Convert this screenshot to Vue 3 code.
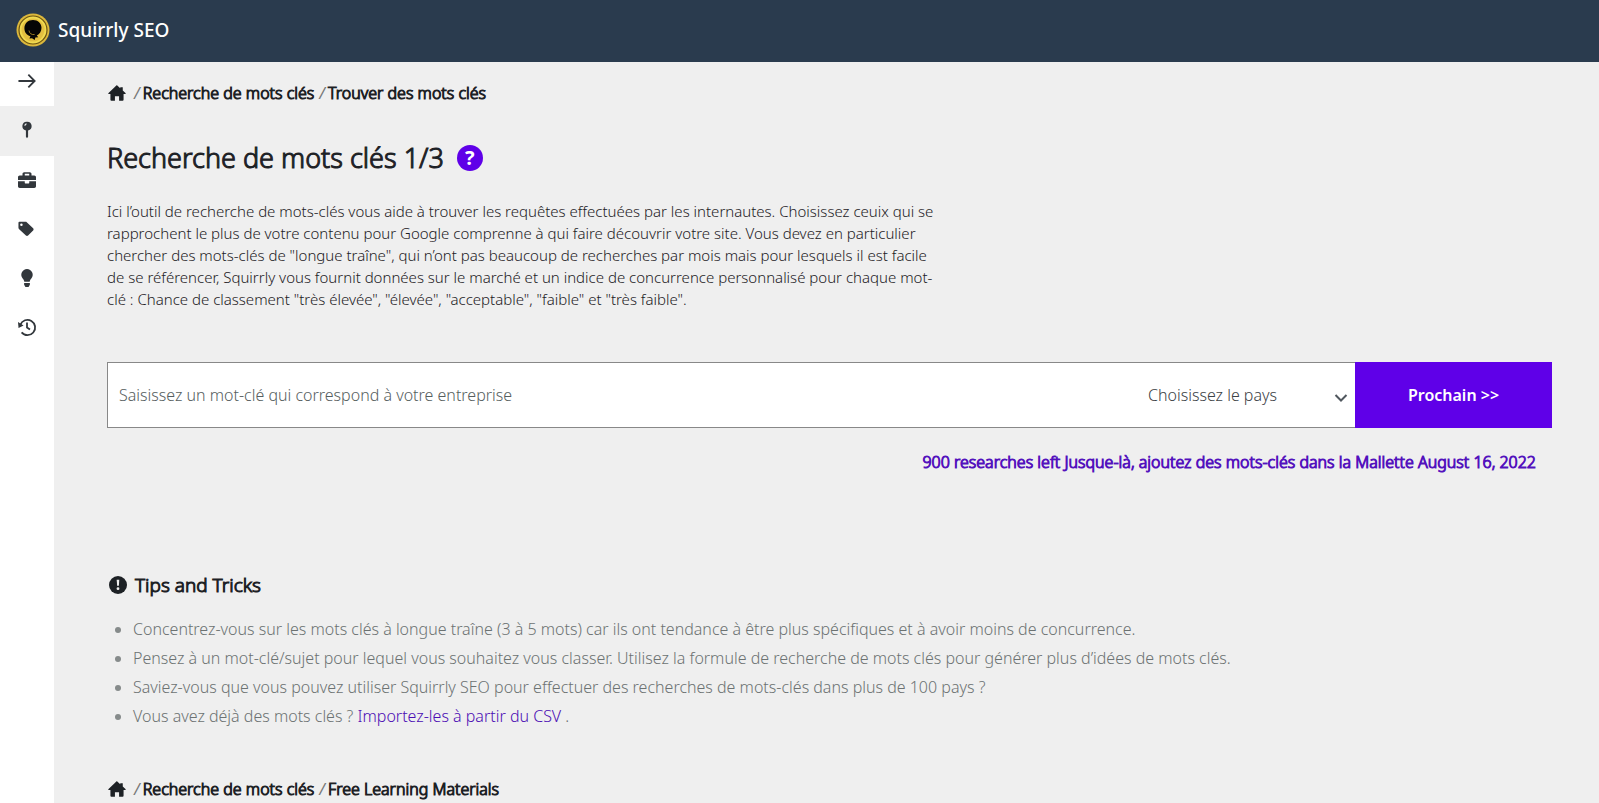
<template>
  <div class="app">
    <header class="topbar">
      <svg class="logo" viewBox="0 0 34 34" aria-hidden="true">
        <circle cx="17" cy="17" r="16.5" fill="#dcb83c" />
        <circle cx="17" cy="17" r="14" fill="#f0da50" stroke="#6b5310" stroke-width="1.2" />
        <circle cx="17" cy="17" r="11.5" fill="#e3bf40" />
        <path d="M17 7c5 0 8.500 3.400 8.500 7.800 0 3.600-1.900 6.400-4.700 7.700l1.500 1.700-2.900.4-.7 2.300-2.700-1.600-2.600.3 1-2.400c-4-1-6-4.300-6-8 0-4.800 3.600-8.200 8.600-8.200z" fill="#050505" />
        <path d="M13 17.500c.4 3 2.600 4.500 5.600 4" fill="none" stroke="#b8932a" stroke-width="0.8" />
      </svg>
      <span class="brand">Squirrly SEO</span>
    </header>

    <div class="layout">
      <nav class="sidebar" aria-label="Menu">
        <a
          v-for="item in menu"
          :key="item.name"
          href="#"
          class="menu-item"
          :class="{ active: item.name === activeMenu }"
          :aria-label="item.label"
          @click.prevent="activeMenu = item.name"
        >
          <svg v-if="item.name === 'toggle'" viewBox="0 0 20 20" class="icon stroke">
            <path d="M.5 10h18M11.500 3l7 7-7 7" />
          </svg>
          <svg v-else-if="item.name === 'research'" viewBox="0 0 20 20" class="icon">
            <path fill-rule="evenodd" d="M10 .8a4.900 4.900 0 0 1 1.200 9.700v7L10 19.300l-1.200-1.800v-7A4.900 4.900 0 0 1 10 .8zm-.6 1.800a2.900 2.900 0 0 0-2.400 2.700h1.300a1.500 1.500 0 0 1 1.200-1.400z" />
          </svg>
          <svg v-else-if="item.name === 'briefcase'" viewBox="0 0 512 512" class="icon">
            <path d="M320 336c0 8.840-7.160 16-16 16h-96c-8.840 0-16-7.160-16-16v-48H0v144c0 25.600 22.400 48 48 48h416c25.600 0 48-22.400 48-48V288H320v48zm144-208h-80V80c0-25.600-22.400-48-48-48H176c-25.600 0-48 22.400-48 48v48H48c-25.600 0-48 22.400-48 48v80h512v-80c0-25.600-22.400-48-48-48zm-144 0H192V80h128v48z" />
          </svg>
          <svg v-else-if="item.name === 'labels'" viewBox="0 0 20 20" class="icon">
            <path fill-rule="evenodd" d="M1.500 2h6.900c.5 0 1 .2 1.300.5l7.100 6.700c.7.700.7 1.700 0 2.400l-5.600 5.700c-.7.700-1.700.7-2.400 0l-7.500-7.100C.7 9.600.5 9.100.5 8.600V3c0-.6.4-1 1-1zm2.300 1.900a1.400 1.400 0 1 0 0 2.800 1.400 1.400 0 0 0 0-2.800z" />
          </svg>
          <svg v-else-if="item.name === 'suggestions'" viewBox="0 0 20 20" class="icon">
            <path d="M10 0a6.500 6.500 0 0 1 5 10.400c-.9 1-1.800 2.500-2 3.800H7c-.2-1.300-1.100-2.800-2-3.800A6.500 6.500 0 0 1 10 0zM6.800 15.500h6.400v2L11.700 20H8.300l-1.500-2.500z" />
          </svg>
          <svg v-else viewBox="0 0 20 20" class="icon history">
            <path d="M2.600 7.500A8.500 8.500 0 1 1 4 16" />
            <path d="M10 5v5.500l3.300 2.300" />
            <path d="M0 4.500l6.200 3.700L.6 11z" class="head" />
          </svg>
        </a>
      </nav>

      <main class="content">
        <nav class="breadcrumbs" aria-label="Fil d'Ariane">
          <a href="#" aria-label="Accueil">
            <svg class="home" viewBox="0 0 20 20"><path d="M10 1.500l3.600 3.200V3.500h2.800v3.700l3 2.700c.6.600.3 1.300-.5 1.300h-1.600v6.300c0 .6-.4 1-1 1h-4v-5H7.700v5h-4c-.6 0-1-.4-1-1v-6.300H1.100c-.8 0-1.100-.7-.5-1.300L9 1.900c.3-.3.700-.4 1-.4z" /></svg>
          </a>
          <span class="crumb"><i>/</i><a href="#">Recherche de mots clés</a></span>
          <span class="crumb"><i>/</i><a href="#">Trouver des mots clés</a></span>
        </nav>

        <h1 class="title">
          Recherche de mots clés 1/3
          <a href="#" class="help" aria-label="Aide">?</a>
        </h1>

        <p class="intro">
          Ici l’outil de recherche de mots-clés vous aide à trouver les requêtes effectuées par les internautes. Choisissez ceuix qui se rapprochent le plus de votre contenu pour Google comprenne à qui faire découvrir votre site. Vous devez en particulier chercher des mots-clés de "longue traîne", qui n’ont pas beaucoup de recherches par mois mais pour lesquels il est facile de se référencer, Squirrly vous fournit données sur le marché et un indice de concurrence personnalisé pour chaque mot-clé : Chance de classement "très élevée", "élevée", "acceptable", "faible" et "très faible".
        </p>

        <form class="search" @submit.prevent>
          <input
            v-model="keyword"
            type="text"
            class="keyword"
            aria-label="Mot-clé"
            placeholder="Saisissez un mot-clé qui correspond à votre entreprise"
          />
          <div class="country">
            <select v-model="country" aria-label="Pays">
              <option value="">Choisissez le pays</option>
              <option value="fr">France</option>
              <option value="us">United States</option>
            </select>
            <svg class="chevron" viewBox="0 0 14 10" aria-hidden="true"><path d="M1.500 2l5.500 5.500L12.500 2" /></svg>
          </div>
          <button type="submit" class="next">Prochain &gt;&gt;</button>
        </form>

        <p class="quota">900 researches left Jusque-là, ajoutez des mots-clés dans la Mallette August 16, 2022</p>

        <section class="tips">
          <h2 class="tips-title">
            <svg class="info" viewBox="0 0 18 18" aria-hidden="true">
              <circle cx="9" cy="9" r="9" />
              <path d="M7.700 3.800h2.600l-.4 6H8.100z" class="mark" />
              <circle cx="9" cy="12.700" r="1.400" class="mark" />
            </svg>
            Tips and Tricks
          </h2>
          <ul>
            <li v-for="tip in tips" :key="tip">{{ tip }}</li>
            <li>Vous avez déjà des mots clés ? <a href="#">Importez-les à partir du CSV</a> .</li>
          </ul>
        </section>

        <nav class="breadcrumbs" aria-label="Ressources">
          <a href="#" aria-label="Accueil">
            <svg class="home" viewBox="0 0 20 20"><path d="M10 1.500l3.600 3.200V3.500h2.800v3.700l3 2.700c.6.600.3 1.300-.5 1.300h-1.600v6.300c0 .6-.4 1-1 1h-4v-5H7.700v5h-4c-.6 0-1-.4-1-1v-6.300H1.100c-.8 0-1.100-.7-.5-1.300L9 1.900c.3-.3.700-.4 1-.4z" /></svg>
          </a>
          <span class="crumb"><i>/</i><a href="#">Recherche de mots clés</a></span>
          <span class="crumb"><i>/</i><a href="#">Free Learning Materials</a></span>
        </nav>
      </main>
    </div>
  </div>
</template>

<script setup>
import { ref } from 'vue';

const keyword = ref('');
const country = ref('');
const activeMenu = ref('research');

const menu = [
  { name: 'toggle', label: 'Ouvrir le menu' },
  { name: 'research', label: 'Recherche' },
  { name: 'briefcase', label: 'Mallette' },
  { name: 'labels', label: 'Étiquettes' },
  { name: 'suggestions', label: 'Suggestions' },
  { name: 'history', label: 'Historique' },
];

const tips = [
  'Concentrez-vous sur les mots clés à longue traîne (3 à 5 mots) car ils ont tendance à être plus spécifiques et à avoir moins de concurrence.',
  'Pensez à un mot-clé/sujet pour lequel vous souhaitez vous classer. Utilisez la formule de recherche de mots clés pour générer plus d’idées de mots clés.',
  'Saviez-vous que vous pouvez utiliser Squirrly SEO pour effectuer des recherches de mots-clés dans plus de 100 pays ?',
];
</script>

<style>
body {
  margin: 0;
  background: #efefef;
}
</style>

<style scoped>
.app {
  display: flex;
  flex-direction: column;
  height: 100vh;
  overflow: hidden;
  font-family: "Noto Sans", sans-serif;
  font-size: 16px;
  font-weight: 300;
  color: #1d2125;
}

* {
  box-sizing: border-box;
}

a {
  color: inherit;
  text-decoration: none;
}

.topbar {
  display: flex;
  flex: none;
  align-items: center;
  gap: 8px;
  height: 62px;
  padding: 0 16px 3px;
  background: #2a3b4e;
}

.logo {
  width: 34px;
  height: 34px;
}

.brand {
  color: #fff;
  font-size: 19px;
  font-weight: 500;
}

.layout {
  display: flex;
  flex: 1;
  min-height: 0;
}

/* sidebar */
.sidebar {
  flex: none;
  width: 54px;
  background: #fff;
}

.menu-item {
  display: flex;
  align-items: center;
  justify-content: center;
  height: 49px;
  padding: 0 1px 1px 0;
}

.menu-item:first-child {
  height: 44px;
  padding-bottom: 6px;
}

.menu-item.active {
  height: 50px;
  padding-bottom: 3px;
  background: #efefef;
}

.icon {
  width: 18px;
  height: 18px;
  fill: #32373c;
  overflow: visible;
}

.icon.stroke,
.history {
  fill: none;
  stroke: #32373c;
  stroke-width: 2;
}

.history .head {
  fill: #32373c;
  stroke: none;
}

/* content */
.content {
  flex: 1;
  min-width: 0;
  padding: 19px 47px 0 53px;
}

/* light face thickened by a thin outline */
.breadcrumbs a,
.title,
.quota,
.tips-title {
  -webkit-text-stroke: 1px;
}

.breadcrumbs {
  display: flex;
  align-items: center;
  gap: 5px;
  height: 24px;
}

.home {
  display: block;
  width: 18px;
  height: 18px;
  margin: 0 3px 0 1px;
  fill: #1d2125;
}

.crumb i {
  margin-right: 3px;
  color: #777;
  font-weight: 400;
}

.title {
  display: flex;
  align-items: center;
  gap: 13px;
  margin: 35px 0 0;
  font-size: 27px;
  line-height: 36px;
  font-weight: 300;
}

.help {
  display: flex;
  align-items: center;
  justify-content: center;
  width: 26px;
  height: 26px;
  border-radius: 50%;
  background: #5f00e8;
  color: #fff;
  font-size: 20px;
  font-weight: 700;
  -webkit-text-stroke: 0;
}

.intro {
  max-width: 834px;
  margin: 24px 0 0;
  font-size: 15px;
  line-height: 22px;
}

.search {
  display: flex;
  height: 66px;
  margin-top: 52px;
}

.keyword {
  flex: 1;
  min-width: 0;
  padding: 0 11px;
  border: 1px solid #888;
  border-right: 0;
  border-radius: 0;
  background: #fff;
  font: inherit;
  outline: none;
}

.keyword::placeholder {
  color: #565e5e;
  opacity: 1;
}

.country {
  position: relative;
  width: 219px;
}

.country select {
  width: 100%;
  height: 100%;
  padding: 0 30px 0 12px;
  border: 1px solid #888;
  border-width: 1px 0;
  border-radius: 0;
  background: #fff;
  color: #3c4246;
  font: inherit;
  appearance: none;
  outline: none;
}

.chevron {
  position: absolute;
  top: 31px;
  right: 7px;
  width: 14px;
  height: 10px;
  fill: none;
  stroke: #50575e;
  stroke-width: 2;
  pointer-events: none;
}

.next {
  width: 197px;
  padding: 0;
  border: 0;
  background: #5f00e8;
  color: #fff;
  font: inherit;
  font-weight: 600;
}

.quota {
  margin: 22px 16px 0;
  line-height: 24px;
  text-align: right;
  color: #5312bd;
}

.tips-title {
  display: flex;
  align-items: center;
  gap: 8px;
  margin: 98px 0 0;
  padding-left: 2px;
  font-size: 19px;
  line-height: 26px;
  font-weight: 300;
}

.info {
  width: 18px;
  height: 18px;
  fill: #1d2125;
}

.info .mark {
  fill: #efefef;
}

.tips ul {
  margin: 17px 0 46px;
  padding-left: 26px;
  color: #6c7272;
}

.tips li {
  line-height: 29px;
}

.tips li::marker {
  color: #868b8b;
}

.tips li a {
  color: #4b0cb4;
}
</style>
